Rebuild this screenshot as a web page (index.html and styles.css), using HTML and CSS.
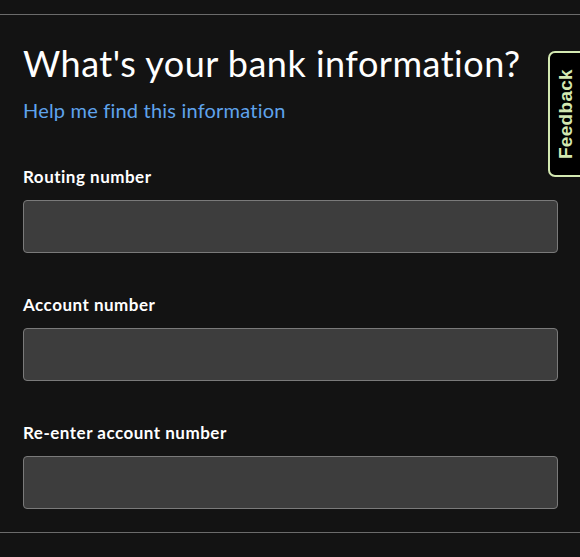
FILE: index.html
```html
<!DOCTYPE html>
<html lang="en">
  <head>
    <meta charset="utf-8">
    <title>Bank information</title>
    <link rel="stylesheet" href="styles.css">
  </head>
  <body>

  <div class="panel">
    <h1 class="title">What's your bank information?</h1>
    <a class="help" href="#">Help me find this information</a>

    <div class="field">
      <label for="routing">Routing number</label>
      <input id="routing" type="text">
    </div>

    <div class="field">
      <label for="account">Account number</label>
      <input id="account" type="text">
    </div>

    <div class="field">
      <label for="account2">Re-enter account number</label>
      <input id="account2" type="text">
    </div>
  </div>

  <a class="feedback" href="#"><span>Feedback</span></a>

  </body>
</html>
```

FILE: styles.css
```css
html {
  height: 100%;
}
body {
  margin: 0;
  padding: 14px 0 0;
  background: #131313;
  color: #ffffff;
  font-family: Lato, "Noto Sans", sans-serif;
  height: 100%;
  box-sizing: border-box;
  overflow: hidden;
}

.panel {
  border-top: 1px solid #6b6b6b;
  border-bottom: 1px solid #6b6b6b;
  padding: 26px 22px 23px 23px;
  display: flex;
  flex-direction: column;
}

.title {
  margin: 0;
  font-size: 36px;
  font-weight: 400;
  line-height: 44px;
  letter-spacing: 0.5px;
}

.help {
  margin-top: 12px;
  color: #5fa3ec;
  font-size: 20px;
  line-height: 26px;
  letter-spacing: 0.2px;
  text-decoration: none;
}

.field {
  display: flex;
  flex-direction: column;
  margin-top: 43px;
}
.field + .field {
  margin-top: 41px;
}

.field label {
  font-size: 17px;
  font-weight: 700;
  line-height: 22px;
  letter-spacing: 0.5px;
  margin-bottom: 12px;
}

.field input {
  height: 53px;
  box-sizing: border-box;
  margin: 0;
  background: #3d3d3d;
  border: 1px solid #7a7a7a;
  border-radius: 4px;
  color: #fff;
  font: 17px Lato, sans-serif;
  padding: 0 12px;
}

.feedback {
  position: absolute;
  top: 51px;
  left: 548px;
  width: 44px;
  height: 126px;
  box-sizing: border-box;
  background: #000;
  border: 2px solid #d3e8b1;
  border-radius: 7px;
  display: flex;
  align-items: center;
  justify-content: flex-start;
  text-decoration: none;
}
.feedback span {
  display: block;
  margin-left: 5px;
  writing-mode: vertical-rl;
  transform: rotate(180deg);
  color: #d3e8b1;
  font: 700 19px "Liberation Sans", Arial, sans-serif;
  letter-spacing: 0.3px;
}
```
